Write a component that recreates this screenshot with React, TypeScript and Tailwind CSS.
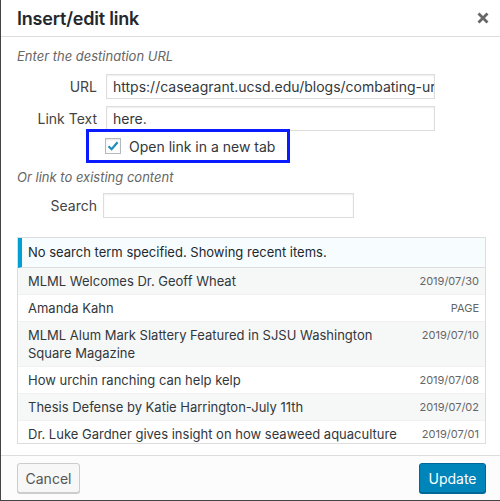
const ITEMS = [
  { title: 'MLML Welcomes Dr. Geoff Wheat', info: '2019/07/30' },
  { title: 'Amanda Kahn', info: 'PAGE' },
  { title: 'MLML Alum Mark Slattery Featured in SJSU Washington Square Magazine', info: '2019/07/10' },
  { title: 'How urchin ranching can help kelp', info: '2019/07/08' },
  { title: 'Thesis Defense by Katie Harrington-July 11th', info: '2019/07/02' },
  { title: 'Dr. Luke Gardner gives insight on how seaweed aquaculture', info: '2019/07/01' },
]

function CloseIcon() {
  return (
    <svg width="12" height="12" viewBox="0 0 12 12" className="text-[#666]">
      <path d="M1.5 1.5 L10.5 10.5 M10.5 1.5 L1.5 10.5" stroke="currentColor" strokeWidth="2.8" strokeLinecap="butt" />
    </svg>
  )
}

function CheckIcon() {
  return (
    <svg width="14" height="14" viewBox="0 0 14 14">
      <path d="M2.5 7.2 L5.6 10.2 L11.6 3.2" fill="none" stroke="#1e8cbe" strokeWidth="2.2" />
    </svg>
  )
}

export default function App() {
  return (
    <div className="w-[500px] h-[501px] flex flex-col bg-white border-l border-b border-[#444] font-['Inter','Liberation_Sans',sans-serif] text-[#32373c] overflow-hidden">
      <div className="h-[37px] shrink-0 flex items-center justify-between border-b border-[#ddd] pl-[16px] pr-[11px]">
        <h1 className="text-[18px] font-semibold text-[#23282d] tracking-[-0.2px]">Insert/edit link</h1>
        <CloseIcon />
      </div>

      <div className="flex-1 flex flex-col pt-[10px] pl-[16px] pr-[14px] min-h-0">
        <p className="text-[13px] leading-[18px] italic text-[#666]">Enter the destination URL</p>

        <div className="flex items-center mt-[9px]">
          <label className="w-[80px] text-right text-[14px] text-[#444]">URL</label>
          <div className="ml-[9px] w-[329px] h-[25px] border border-[#ddd] shadow-[inset_0_1px_2px_rgba(0,0,0,0.07)] px-[6px] flex items-center overflow-hidden">
            <span className="text-[14px] whitespace-nowrap">https://caseagrant.ucsd.edu/blogs/combating-urchins</span>
          </div>
        </div>

        <div className="flex items-center mt-[7px]">
          <label className="w-[80px] text-right text-[14px] text-[#444]">Link Text</label>
          <div className="ml-[9px] w-[329px] h-[25px] border border-[#ddd] shadow-[inset_0_1px_2px_rgba(0,0,0,0.07)] px-[6px] flex items-center">
            <span className="text-[14px]">here.</span>
          </div>
        </div>

        <div className="-mt-[2px] ml-[69px] w-[204px] h-[34px] border-[3px] border-[#0a1cff] flex items-center pl-[16px] relative">
          <span className="w-[16px] h-[16px] border border-[#b4b9be] bg-white shadow-[inset_0_1px_2px_rgba(0,0,0,0.1)] flex items-center justify-center">
            <CheckIcon />
          </span>
          <span className="ml-[8px] text-[14px] text-[#32373c]">Open link in a new tab</span>
        </div>

        <p className="mt-[5px] text-[13px] leading-[18px] italic text-[#666]">Or link to existing content</p>

        <div className="flex items-center mt-[7px]">
          <label className="w-[80px] text-right text-[14px] text-[#444]">Search</label>
          <div className="ml-[6px] w-[251px] h-[25px] border border-[#ddd] shadow-[inset_0_1px_2px_rgba(0,0,0,0.07)]" />
        </div>

        <div className="mt-[19px] w-[469px] h-[207px] border border-[#ddd] overflow-hidden">
          <div className="h-[30px] flex items-center border-b border-[#ddd] bg-[#f7fcfe] border-l-[4px] border-l-[#00a0d2] pl-[6px]">
            <span className="text-[13px] text-[#23282d]">No search term specified. Showing recent items.</span>
          </div>
          {ITEMS.map((item, i) => (
            <div
              key={item.title}
              className={
                'flex items-start justify-between py-[4px] pl-[10px] pr-[6px] border-b border-[#f1f1f1] ' +
                (i % 2 === 0 ? 'bg-[#f6f7f7]' : 'bg-white')
              }
            >
              <span className="text-[13px] leading-[18px] text-[#32373c] w-[370px]">{item.title}</span>
              <span className="text-[11px] leading-[18px] text-[#666] uppercase">{item.info}</span>
            </div>
          ))}
        </div>
      </div>

      <div className="h-[45px] shrink-0 border-t border-[#ddd] bg-[#fcfcfc] flex items-center justify-between pl-[16px] pr-[14px]">
        <button className="h-[30px] w-[63px] rounded-[3px] border border-[#ccc] bg-[#f7f7f7] shadow-[0_1px_0_#ccc] text-[14px] text-[#555]">
          Cancel
        </button>
        <button className="h-[30px] w-[67px] rounded-[3px] border border-[#006799] bg-[#0085ba] shadow-[0_1px_0_#006799] text-[14px] text-white">
          Update
        </button>
      </div>
    </div>
  )
}
